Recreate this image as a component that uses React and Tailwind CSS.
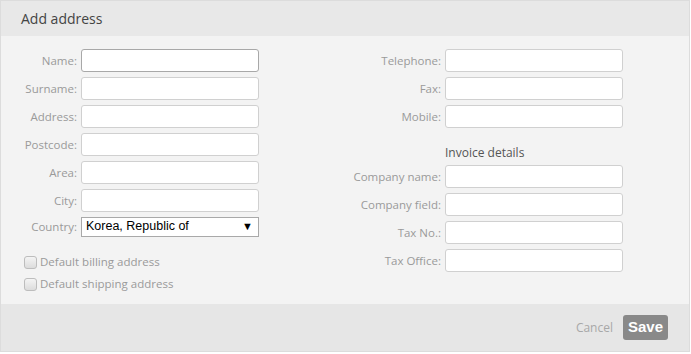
import React from 'react';

const leftFields = ['Name:', 'Surname:', 'Address:', 'Postcode:', 'Area:', 'City:'];
const contactFields = ['Telephone:', 'Fax:', 'Mobile:'];
const invoiceFields = ['Company name:', 'Company field:', 'Tax No.:', 'Tax Office:'];

const Field = ({ label, labelWidth, focused }) => (
  <div className="flex items-center h-[23px]">
    <label
      className="text-right text-[11.5px] text-[#9a9a9a] pr-[4px] shrink-0"
      style={{ width: labelWidth }}
    >
      {label}
    </label>
    <input
      type="text"
      className={`w-[178px] h-[23px] bg-white rounded-[3px] border outline-none ${
        focused ? 'border-[#a8a8a8]' : 'border-[#d0d0d0]'
      }`}
    />
  </div>
);

const Checkbox = ({ label }) => (
  <label className="flex items-center gap-[3px] h-[16px] text-[11.5px] text-[#9a9a9a]">
    <span className="w-[13px] h-[13px] rounded-[3px] border border-[#bdbdbd] bg-gradient-to-b from-[#f4f4f4] to-[#dcdcdc] shrink-0" />
    {label}
  </label>
);

export default function App() {
  return (
    <div className="w-[691px] h-[354px] bg-white" style={{ fontFamily: '"Open Sans", "Liberation Sans", sans-serif' }}>
      <div className="w-[690px] h-[352px] border border-[#dcdcdc] flex flex-col">
        <div className="h-[35px] bg-[#e8e8e8] px-5 flex items-center text-[14px] text-[#444] shrink-0">
          Add address
        </div>
        <div className="flex-1 bg-[#f3f3f3] flex pt-[13px]">
          <div className="w-[344px] flex flex-col">
            <div className="flex flex-col gap-[5px]">
              {leftFields.map((f, i) => (
                <Field key={f} label={f} labelWidth={80} focused={i === 0} />
              ))}
            </div>
            <div className="flex items-center mt-[4px] h-[21px]">
              <label className="w-[80px] text-right text-[11.5px] text-[#9a9a9a] pr-[4px]">Country:</label>
              <div
                className="w-[178px] h-[20px] bg-white border border-[#a9a9a9] flex items-center justify-between pl-[4px] pr-[5px] text-[12.5px] text-black"
                style={{ fontFamily: '"Liberation Sans", Arial, sans-serif' }}
              >
                <span>Korea, Republic of</span>
                <span className="text-[11px]">▼</span>
              </div>
            </div>
            <div className="flex flex-col gap-[6px] mt-[17px] pl-[23px]">
              <Checkbox label="Default billing address" />
              <Checkbox label="Default shipping address" />
            </div>
          </div>
          <div className="flex flex-col">
            <div className="flex flex-col gap-[5px]">
              {contactFields.map((f) => (
                <Field key={f} label={f} labelWidth={100} />
              ))}
            </div>
            <div className="h-[37px] pl-[100px] flex items-end text-[12px] text-[#555] pb-[3px]">
              Invoice details
            </div>
            <div className="flex flex-col gap-[5px]">
              {invoiceFields.map((f) => (
                <Field key={f} label={f} labelWidth={100} />
              ))}
            </div>
          </div>
        </div>
        <div className="h-[47px] bg-[#e6e6e6] flex items-center justify-end gap-[10px] pr-[21px] shrink-0">
          <span className="text-[12px] text-[#a8a8a8]">Cancel</span>
          <button
            className="w-[45px] h-[25px] rounded-[3px] bg-[#898989] text-white text-[15px] font-bold"
            style={{ fontFamily: '"Liberation Sans", Arial, sans-serif' }}
          >
            Save
          </button>
        </div>
      </div>
    </div>
  );
}
